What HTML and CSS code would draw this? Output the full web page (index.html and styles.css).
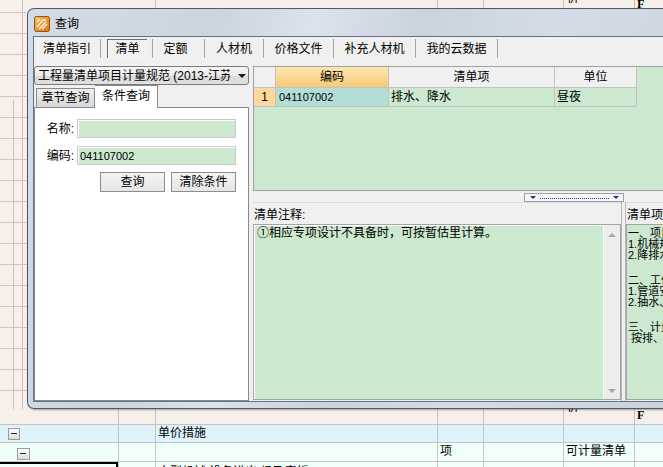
FILE: index.html
```html
<!DOCTYPE html>
<html lang="zh-CN">
<head>
<meta charset="utf-8">
<title>查询</title>
<link rel="stylesheet" href="styles.css">
</head>
<body>
<div class="sheet">
  <div class="upper">
    <div class="srow toprow">
      <div class="sc w22"></div><div class="sc w133"></div><div class="sc w282"></div><div class="sc w46"></div><div class="sc w80"></div><div class="sc w71"><span class="cut">价</span></div><div class="sc w40"><span class="ftxt">F</span></div>
    </div>
  </div>
  <div class="srow hdr">
    <div class="sc w118"></div><div class="sc w37"></div><div class="sc w282"></div><div class="sc w46"></div><div class="sc w80"></div><div class="sc w71"><span class="cut">价</span></div><div class="sc w40"><span class="ftxt">F</span></div>
  </div>
  <div class="srow blue">
    <div class="sc w118"><span class="tbox tb1"></span></div><div class="sc w37"></div><div class="sc w282 txt">单价措施</div><div class="sc w46"></div><div class="sc w80"></div><div class="sc w71"></div><div class="sc w40"></div>
  </div>
  <div class="srow mint">
    <div class="sc w118"><span class="tbox tb2"></span></div><div class="sc w37"></div><div class="sc w282"></div><div class="sc w46 txt">项</div><div class="sc w80"></div><div class="sc w71 txt">可计量清单</div><div class="sc w40"></div>
  </div>
  <div class="srow last">
    <div class="sc w118 sel"></div><div class="sc w37 txt ctr">1</div><div class="sc w282 txt">大型机械 设备进出 场及安拆</div><div class="sc w46"></div><div class="sc w80"></div><div class="sc w71"></div><div class="sc w40"></div>
  </div>
</div>

<div class="dialog">
  <div class="titlebar">
    <svg class="appicon" width="16" height="16" viewBox="0 0 16 16">
      <defs>
        <linearGradient id="ig" x1="0" y1="0" x2="1" y2="1">
          <stop offset="0" stop-color="#f9c060"/>
          <stop offset="1" stop-color="#d9761c"/>
        </linearGradient>
      </defs>
      <rect x="0.5" y="0.5" width="15" height="15" rx="2" fill="url(#ig)" stroke="#9a4f10"/>
      <path d="M3 11 L9 4 L12 4 M5 13 L12 6 M8 13 L13 8" fill="none" stroke="#fff3dc" stroke-width="1.4"/>
      <path d="M3 6 L6 3" fill="none" stroke="#fff3dc" stroke-width="1.2"/>
    </svg>
    <span class="title">查询</span>
  </div>
  <div class="client">
    <div class="tabs">
      <div class="tab t1">清单指引</div>
      <div class="tab t2"><span class="selbox">清单</span></div>
      <div class="tab t3">定额</div>
      <div class="tab t4">人材机</div>
      <div class="tab t5">价格文件</div>
      <div class="tab t6">补充人材机</div>
      <div class="tab t7">我的云数据</div>
    </div>
    <div class="main">
      <div class="leftcol">
        <div class="combo"><span class="combo-text">工程量清单项目计量规范 (2013-江苏</span><span class="combo-arrow"></span></div>
        <div class="subtabs">
          <div class="subtab">章节查询</div>
          <div class="subtab active">条件查询</div>
        </div>
        <div class="qpanel">
          <div class="frow first"><span class="flabel">名称:</span><span class="finput"></span></div>
          <div class="frow"><span class="flabel">编码:</span><span class="finput num">041107002</span></div>
          <div class="btnrow"><span class="btn">查询</span><span class="btn">清除条件</span></div>
        </div>
      </div>
      <div class="rightcol">
        <div class="grid">
          <div class="grow ghead">
            <div class="gc rn"></div>
            <div class="gc code hot">编码</div>
            <div class="gc name">清单项</div>
            <div class="gc unit">单位</div>
          </div>
          <div class="grow gdata">
            <div class="gc rn rnsel">1</div>
            <div class="gc code cur num">041107002</div>
            <div class="gc name left">排水、降水</div>
            <div class="gc unit left">昼夜</div>
          </div>
        </div>
        <div class="splitrow">
          <div class="splitter"><span class="tri"></span><span class="dots"></span><span class="tri"></span></div>
        </div>
        <div class="lower">
          <div class="notepanel">
            <div class="plabel">清单注释:</div>
            <div class="tarea">
              <div class="tcontent">①相应专项设计不具备时，可按暂估里计算。</div>
              <div class="vscroll"><span class="up"></span><span class="down"></span></div>
            </div>
          </div>
          <div class="vsep"></div>
          <div class="descpanel">
            <div class="plabel">清单项目说明:</div>
            <div class="tarea2">
              <div class="grp">
                <div class="ln">一、项目特征</div>
                <div class="ln">1.机械规格型号</div>
                <div class="ln">2.降排水管规格</div>
              </div>
              <div class="grp">
                <div class="ln">二、工作内容</div>
                <div class="ln">1.管道安装、拆除，场内搬运等</div>
                <div class="ln">2.抽水、值班、降水设备维修等</div>
              </div>
              <div class="grp">
                <div class="ln">三、计量单位</div>
                <div class="ln">&nbsp;按排、降水日历天数计算</div>
              </div>
            </div>
          </div>
        </div>
      </div>
    </div>
  </div>
</div>
</body>
</html>
```
FILE: styles.css
```css
html, body {
  margin: 0;
  padding: 0;
}
body {
  width: 663px;
  height: 467px;
  overflow: hidden;
  position: relative;
  background: #f7efe9;
  font-family: "Liberation Sans", "Noto Sans CJK SC", sans-serif;
  font-size: 12px;
  color: #000;
}

/* ---------- spreadsheet behind the dialog ---------- */
.sheet {
  display: flex;
  flex-direction: column;
  width: 700px;
}
.upper {
  height: 409px;
  background-color: #f7efe9;
  background-image:
    linear-gradient(#c9c1b9, #c9c1b9),
    linear-gradient(#c9c1b9, #c9c1b9),
    repeating-linear-gradient(to bottom, transparent 0 12px, #cfc7bf 12px 13px, transparent 13px 21px);
  background-repeat: no-repeat, no-repeat, no-repeat;
  background-position: 22px 0, 13px 100px, 0 0;
  background-size: 1px 100%, 1px 309px, 27px 100%;
}
.srow {
  display: flex;
  flex: none;
}
.sc {
  box-sizing: border-box;
  flex: none;
  border-left: 1px solid #c4c4c4;
  overflow: visible;
  white-space: nowrap;
}
.sc:first-child { border-left: none; }
.w22 { width: 22px; }
.w133 { width: 133px; }
.w118 { width: 118px; }
.w37 { width: 37px; }
.w282 { width: 282px; }
.w46 { width: 46px; }
.w80 { width: 80px; }
.w71 { width: 71px; }
.w40 { width: 66px; }

.toprow {
  height: 9px;
  background: #f7efe9;
}
.toprow .sc { border-left-color: #c9c1b9; }
.cut {
  display: block;
  line-height: 12px;
  margin-top: -8px;
  padding-left: 3px;
  overflow: hidden;
}
.ftxt {
  display: block;
  font-family: "Liberation Serif", serif;
  font-weight: bold;
  font-size: 12px;
  line-height: 12px;
  padding-left: 2px;
}
.toprow .ftxt { margin-top: -2px; }
.toprow .cut { margin-top: -8px; }

.hdr {
  height: 16px;
  background: #f7efe9;
  border-bottom: 1px solid #c4c4c4;
  box-sizing: border-box;
}
.hdr .ftxt { margin-top: -10px; padding-top: 10px; }
.blue {
  height: 18px;
  background: #dff3fc;
  border-bottom: 1px solid #c4c4c4;
  box-sizing: border-box;
}
.mint {
  height: 19px;
  background: #f0fffa;
  border-bottom: 1px solid #c4c4c4;
  box-sizing: border-box;
}
.last {
  height: 20px;
  background: #f0fffa;
}
.txt {
  line-height: 17px;
  padding-left: 2px;
}
.ctr { text-align: center; padding-left: 0; }
.last .txt { line-height: 14px; padding-top: 3px; }
.last .sel {
  border-top: 2px solid #000;
  border-right: 2px solid #000;
}
.tbox {
  display: block;
  box-sizing: border-box;
  width: 12px;
  height: 12px;
  border: 1px solid #9a9a9a;
  background: linear-gradient(#ffffff, #dcdcdc);
  position: relative;
}
.tbox::after {
  content: "";
  position: absolute;
  left: 2px;
  top: 4px;
  width: 6px;
  height: 1px;
  background: #222;
}
.tb1 { margin: 3px 0 0 8px; }
.tb2 { margin: 5px 0 0 17px; width: 13px; }

/* ---------- dialog ---------- */
.dialog {
  position: absolute;
  left: 27px;
  top: 8px;
  width: 660px;
  height: 401px;
  box-sizing: border-box;
  border: 1px solid #4f5a66;
  border-right: none;
  border-radius: 7px 0 0 7px;
  background: linear-gradient(105deg, #d3dce6 0%, #cbd5e0 25%, #dbe3ec 38%, #c9d3de 52%, #d4dde7 70%, #c7d1dc 100%);
  box-shadow: 1px 1px 2px rgba(0, 0, 0, 0.35);
  display: flex;
  flex-direction: column;
}
.titlebar {
  height: 27px;
  flex: none;
  display: flex;
  align-items: center;
  padding-left: 6px;
}
.appicon { display: block; margin-top: 2px; }
.title {
  margin-left: 5px;
  font-size: 12px;
  line-height: 14px;
  margin-top: 2px;
}
.client {
  margin-left: 5px;
  height: 366px;
  flex: none;
  box-sizing: border-box;
  border: 1px solid #68727e;
  border-right: none;
  background: #f0f0f0;
  display: flex;
  flex-direction: column;
}

/* tabs */
.tabs {
  display: flex;
  height: 21px;
  flex: none;
}
.tab {
  box-sizing: border-box;
  height: 19px;
  margin-top: 2px;
  border-right: 1px solid #a5a5a5;
  display: flex;
  align-items: center;
  justify-content: center;
  line-height: 14px;
  white-space: nowrap;
}
.t1 { width: 67px; }
.t2 { width: 52px; }
.t3 { width: 52px; padding-right: 6px; }
.t4 { width: 59px; }
.t5 { width: 70px; }
.t6 { width: 82px; }
.t7 { width: 82px; }
.selbox {
  box-sizing: border-box;
  width: 40px;
  height: 19px;
  margin-left: 1px;
  display: flex;
  align-items: center;
  justify-content: center;
  border-top: 1px solid #6e6e6e;
  border-left: 1px solid #6e6e6e;
  background: repeating-conic-gradient(#ffffff 0 25%, #e6e6e6 0 50%) 0 0 / 2px 2px;
}

/* main area */
.main {
  display: flex;
  gap: 4px;
  margin-top: 8px;
  flex: 1;
  min-height: 0;
}
.leftcol {
  width: 215px;
  flex: none;
  display: flex;
  flex-direction: column;
}
.combo {
  box-sizing: border-box;
  height: 19px;
  flex: none;
  border: 1px solid #7b7b7b;
  border-radius: 3px;
  background: linear-gradient(#f6f6f6, #eaeaea 50%, #dadada 51%, #e0e0e0);
  display: flex;
  align-items: center;
  padding-left: 3px;
  overflow: hidden;
}
.combo-text {
  flex: 1;
  white-space: nowrap;
  overflow: hidden;
  line-height: 14px;
}
.combo-arrow {
  width: 0;
  height: 0;
  border-left: 4px solid transparent;
  border-right: 4px solid transparent;
  border-top: 4px solid #1a1a1a;
  margin: 1px 2px 0 8px;
  flex: none;
}
.subtabs {
  height: 22px;
  flex: none;
  display: flex;
  align-items: flex-end;
  padding-left: 2px;
}
.subtab {
  box-sizing: border-box;
  width: 59px;
  height: 19px;
  border: 1px solid #8a8a8a;
  border-bottom: none;
  background: linear-gradient(#efefef, #d8d8d8);
  display: flex;
  align-items: center;
  justify-content: center;
  line-height: 14px;
  white-space: nowrap;
}
.subtab.active {
  width: 63px;
  height: 23px;
  margin-bottom: -1px;
  background: #ffffff;
  border-left: none;
  position: relative;
  padding-bottom: 2px;
}
.qpanel {
  flex: 1;
  box-sizing: border-box;
  border: 1px solid #878a92;
  background: #ffffff;
  display: flex;
  flex-direction: column;
}
.frow {
  display: flex;
  align-items: center;
  margin-top: 8px;
  height: 19px;
}
.frow.first { margin-top: 11px; }
.flabel {
  width: 39px;
  text-align: right;
  line-height: 14px;
  margin-right: 3px;
}
.finput {
  box-sizing: border-box;
  width: 159px;
  height: 19px;
  border: 1px solid #c9c9c9;
  box-shadow: inset 1px 1px 0 #ffffff;
  background: #cce8cf;
  display: flex;
  align-items: center;
  padding-left: 2px;
}
.num {
  font-family: "Liberation Sans", sans-serif;
  font-size: 11px;
}
.btnrow {
  display: flex;
  gap: 6px;
  margin-top: 7px;
  padding-left: 65px;
}
.btn {
  box-sizing: border-box;
  width: 65px;
  height: 20px;
  border: 1px solid #8d8d8d;
  background: linear-gradient(#f4f4f4, #e6e6e6);
  display: flex;
  align-items: center;
  justify-content: center;
  line-height: 14px;
  white-space: nowrap;
}

/* right column */
.rightcol {
  flex: 1;
  min-width: 0;
  display: flex;
  flex-direction: column;
}
.grid {
  box-sizing: border-box;
  height: 125px;
  flex: none;
  border: 1px solid #a2a2a2;
  background: #cce8cf;
}
.grow {
  display: flex;
}
.ghead { height: 21px; }
.gdata { height: 19px; }
.gc {
  box-sizing: border-box;
  border-right: 1px solid #c2c2c2;
  border-bottom: 1px solid #c2c2c2;
  display: flex;
  align-items: center;
  justify-content: center;
  line-height: 14px;
  white-space: nowrap;
  flex: none;
}
.ghead .gc { background: #f0f0f0; }
.ghead .gc.hot { background: linear-gradient(#fee6b0, #f6c976); }
.rn { width: 22px; }
.code { width: 113px; }
.name { width: 166px; }
.unit { width: 82px; }
.rnsel { background: #fdd89c; }
.cur { background: #b3ded7; justify-content: flex-start; padding-left: 3px; }
.left { justify-content: flex-start; padding-left: 2px; }

.splitrow {
  height: 11px;
  flex: none;
}
.splitter {
  box-sizing: border-box;
  width: 100px;
  height: 9px;
  margin: 2px 0 0 271px;
  border: 1px solid #98a0aa;
  background: #f6f6f6;
  display: flex;
  align-items: center;
  padding: 0 4px 0 5px;
  gap: 4px;
}
.tri {
  width: 0;
  height: 0;
  border-left: 3px solid transparent;
  border-right: 3px solid transparent;
  border-top: 3px solid #1c2f8a;
  flex: none;
}
.dots {
  flex: 1;
  height: 0;
  border-top: 1px dotted #2a3c94;
  margin-top: 1px;
}

.lower {
  flex: 1;
  min-height: 0;
  display: flex;
}
.notepanel {
  width: 368px;
  flex: none;
  display: flex;
  flex-direction: column;
  border-top: 1px solid #dcdcdc;
}
.plabel {
  height: 21px;
  flex: none;
  box-sizing: border-box;
  padding: 3px 0 0 1px;
  line-height: 18px;
  white-space: nowrap;
}
.tarea {
  flex: 1;
  box-sizing: border-box;
  border: 1px solid #a4a4a4;
  box-shadow: inset 1px 1px 0 #ffffff;
  background: #cce8cf;
  display: flex;
  margin-bottom: 1px;
}
.tcontent {
  flex: 1;
  padding: 1px 0 0 3px;
  line-height: 14px;
  white-space: nowrap;
}
.vscroll {
  width: 17px;
  flex: none;
  box-sizing: border-box;
  border-left: 1px solid #ffffff;
  background: #eceeec;
  display: flex;
  flex-direction: column;
  justify-content: space-between;
  align-items: center;
  padding: 8px 0 6px;
}
.up {
  width: 0;
  height: 0;
  border-left: 4px solid transparent;
  border-right: 4px solid transparent;
  border-bottom: 4px solid #a8a8a8;
}
.down {
  width: 0;
  height: 0;
  border-left: 4px solid transparent;
  border-right: 4px solid transparent;
  border-top: 4px solid #a8a8a8;
}
.vsep {
  width: 5px;
  flex: none;
  box-sizing: border-box;
  border-left: 1px solid #b4b4b4;
  border-right: 1px solid #b4b4b4;
  background: #f0f0f0;
}
.descpanel {
  flex: 1;
  min-width: 0;
  display: flex;
  flex-direction: column;
  border-top: 1px solid #dcdcdc;
}
.tarea2 {
  flex: 1;
  box-sizing: border-box;
  border: 1px solid #a4a4a4;
  background: #cce8cf;
  padding: 3px 0 0 1px;
  margin-bottom: 1px;
  overflow: hidden;
}
.grp + .grp { margin-top: 14px; }
.ln {
  font-size: 11px;
  line-height: 11px;
  height: 11px;
  white-space: nowrap;
}
```
